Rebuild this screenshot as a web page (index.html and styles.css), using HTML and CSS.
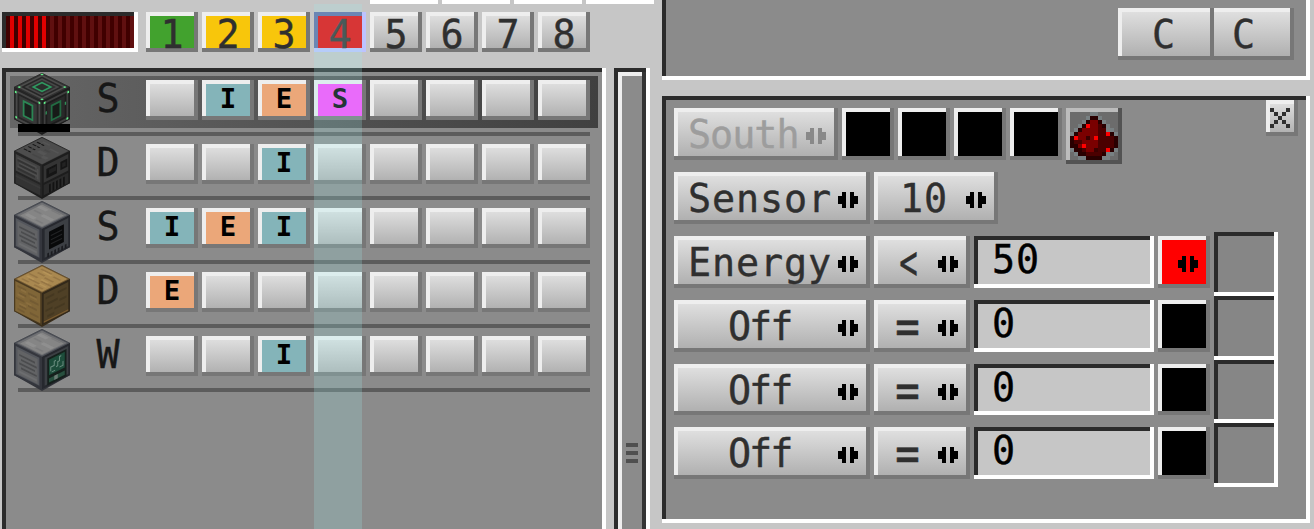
FILE: index.html
```html
<!DOCTYPE html>
<html lang="en">
<head>
<meta charset="utf-8">
<title>Controller</title>
<link rel="stylesheet" href="styles.css">
</head>
<body>
<svg class="defs" aria-hidden="true">
  <defs>
    <symbol id="arrows" viewBox="0 0 5 4"><path d="M0 1h1V0h1v4H1V3H0zM3 0h1v1h1v2H4v1H3z"/></symbol>
    <g id="steel-body">
      <path fill="#33353b" d="M28 0l28 14v32L28 62 0 46V14z"/>
      <g transform="matrix(1.75 .875 -1.75 .875 28 0)">
        <path fill="#4b4e55" d="M0 0h16v16H0z"/><path fill="#6f7073" d="M.8 .8h14.400v14.400H.8z"/><path fill="#858585" d="M2 2h12.500v12.500H2z"/>
        <path fill="#8f8f8f" d="M2 3h5v2H2zM8 7h6v2H8zM3 11h5v2H3z"/><path fill="#7b7b7c" d="M8 2h5v1H8zM3 7h4v1H3zM9 12h4v1H9z"/>
      </g>
      <g transform="matrix(1.75 .875 0 2.08 0 14)">
        <path fill="#34363d" d="M0 0h16v15.500H0z"/><path fill="#54575d" d="M1 1h13.500v13.500H1z"/><path fill="#626365" d="M2 2h11.500v12H2z"/>
        <path fill="#4b4c4e" d="M3 4h9v.9H3zM4 6h9v.9H4zM3 8h9v.9H3zM4 10h9v.9H4z"/><path fill="#6c6d6f" d="M3 12h10v1H3z"/>
      </g>
      <g transform="matrix(1.75 -.875 0 2.08 28 28)">
        <path fill="#26282e" d="M0 0h16v15.500H0z"/><path fill="#3c3f44" d="M1.500 1h13.500v13.500H1.500z"/>
      </g>
    </g>
  </defs>
</svg>

<div class="screen">
  <div class="left">
    <div class="tabs"><i></i><i></i><i></i><i></i></div>
    <div class="toolbar">
      <div class="power sunken"><div class="power-on"></div></div>
      <div class="digits">
        <div class="btn key green">1</div><div class="btn key yellow">2</div><div class="btn key yellow">3</div><div class="btn key red">4</div>
        <div class="btn key">5</div><div class="btn key">6</div><div class="btn key">7</div><div class="btn key">8</div>
      </div>
    </div>
    <div class="browser">
      <div class="list sunken">
        <div class="row selected">
          <svg class="cube" viewBox="0 0 56 62">
            <path fill="#1c1c1c" d="M28 0l28 14v32L28 62 0 46V14z"/>
            <g transform="matrix(1.75 .875 -1.75 .875 28 0)"><path fill="#303030" d="M0 0h16v16H0z"/><path fill="#4d4d4c" d="M1 1h14v14H1z"/><path fill="#262626" d="M2 2h12v12H2z"/><path fill="#474747" d="M3 3h10v10H3z"/><path fill="#303030" d="M4 4h8v8H4z"/><path fill="#2f9a60" d="M5 5h6v6H5z"/><path fill="#2b2e2c" d="M6 6h4v4H6z"/><path fill="#61f58a" d="M.3 .3h1v1h-1zM14 1h1v1h-1zM1 14h1v1H1zM14.500 14.500h1v1h-1z"/></g>
            <g transform="matrix(1.75 .875 0 2.08 0 14)"><path fill="#252525" d="M0 0h16v15.500H0z"/><path fill="#484848" d="M1 1h1v14H1zM14 1h1v14h-1zM1 1h14v1H1zM1 14h14v1H1z"/><path fill="#383838" d="M3 3h10v10H3z"/><path fill="#2b8654" d="M5 4h6v8H5z"/><path fill="#1b211d" d="M6 5h4v6H6z"/><path fill="#61f58a" d="M.5 1.500h1v1h-1zM.8 13.500h1v1h-1zM14 1h1v1h-1zM14 14h1v1h-1z"/></g>
            <g transform="matrix(1.75 -.875 0 2.08 28 28)"><path fill="#1d1d1d" d="M0 0h16v15.500H0z"/><path fill="#3f3f3f" d="M1 1h1v14H1zM14 1h1v14h-1zM1 1h14v1H1zM1 14h14v1H1z"/><path fill="#292929" d="M3 3h10v10H3z"/><path fill="#226b42" d="M5 4h6v8H5z"/><path fill="#171b18" d="M6 5h4v6H6z"/><path fill="#61f58a" d="M1 1h1v1H1zM14.500 1.500h1v1h-1zM14 14h1v1h-1zM1 14h1v1H1z"/><path fill="#308b56" d="M2 6h.8v1.500H2zM13 6h.8v1.500H13z"/></g>
          </svg>
          <div class="durability"></div>
          <div class="letter">S</div>
          <div class="slots"><div class="btn tag"></div><div class="btn tag teal">I</div><div class="btn tag orange">E</div><div class="btn tag pink">S</div><div class="btn tag"></div><div class="btn tag"></div><div class="btn tag"></div><div class="btn tag"></div></div>
        </div>
        <div class="row">
          <svg class="cube" viewBox="0 0 56 62">
            <path fill="#1c1c1c" d="M28 0l28 14v32L28 62 0 46V14z"/>
            <g transform="matrix(1.75 .875 -1.75 .875 28 0)"><path fill="#303030" d="M0 0h16v16H0z"/><path fill="#4d4d4d" d="M.5 .5h15v15H.5z"/><path fill="#555" d="M3 2h4v1H3zM9 4h5v1H9zM7 8h4v2H7zM11 10h3v2h-3z"/><path fill="#474747" d="M8 6h3v1H8zM7 12h5v1H7z"/><path fill="#161616" d="M1.500 4h2v.7h-2zM4 4h1.500v.7H4zM1.500 6.500h2v.7h-2zM4 6.500h1.500v.7H4zM1.500 9h2v.7h-2zM4 9h1.500v.7H4zM1.500 11.500h2v.7h-2zM4 11.500h1.500v.7H4z"/></g>
            <g transform="matrix(1.75 .875 0 2.08 0 14)"><path fill="#252525" d="M0 0h16v15.500H0z"/><path fill="#424242" d="M1 1h14v8H1z"/><path fill="#4e4e4e" d="M2 2h11v1H2zM3 4h10v1H3zM2 6h11v1H2zM13 3h1v5h-1z"/><path fill="#333" d="M2 3h10v1H2zM3 5h10v1H3zM2 7h10v1H2zM1 10h14v5H1z"/><path fill="#3a3a3a" d="M1 11h14v1H1z"/></g>
            <g transform="matrix(1.75 -.875 0 2.08 28 28)"><path fill="#1d1d1d" d="M0 0h16v15.500H0z"/><path fill="#343434" d="M1 1h14v8H1z"/><path fill="#151515" d="M2.500 3h6v4.500h-6zM10.500 3h4v4h-4z"/><path fill="#222" d="M4 4h4v2H4zM11.500 4h2v2h-2z"/><path fill="#2a2a2a" d="M1 10h14v5H1z"/><path fill="#131313" d="M4 11h1v4H4zM6 11h1v4H6zM8 11h1v4H8zM10 11h1v4h-1zM12 11h1v4h-1z"/></g>
          </svg>
          <div class="letter">D</div>
          <div class="slots"><div class="btn tag"></div><div class="btn tag"></div><div class="btn tag teal">I</div><div class="btn tag"></div><div class="btn tag"></div><div class="btn tag"></div><div class="btn tag"></div><div class="btn tag"></div></div>
        </div>
        <div class="row">
          <svg class="cube" viewBox="0 0 56 62"><use href="#steel-body"/>
            <g transform="matrix(1.75 -.875 0 2.08 28 28)"><path fill="#08090a" d="M4 3h8.500v8.500H4z"/><path fill="#222325" d="M5 5h6.500v.6H5zM5 7h6.500v.6H5zM5 9h6.500v.6H5z"/><path fill="#1b1c20" d="M3 13h1v2H3zM5 13h1v2H5zM7 13h1v2H7zM9 13h1v2H9zM11 13h1v2h-1zM13 13h1v2h-1z"/></g>
          </svg>
          <div class="letter">S</div>
          <div class="slots"><div class="btn tag teal">I</div><div class="btn tag orange">E</div><div class="btn tag teal">I</div><div class="btn tag"></div><div class="btn tag"></div><div class="btn tag"></div><div class="btn tag"></div><div class="btn tag"></div></div>
        </div>
        <div class="row">
          <svg class="cube" viewBox="0 0 56 62">
            <path fill="#3a2e1b" d="M28 0l28 14v32L28 62 0 46V14z"/>
            <g transform="matrix(1.75 .875 -1.75 .875 28 0)"><path fill="#6e5631" d="M0 0h16v16H0z"/><path fill="#a98850" d="M.7 .7h14.600v14.600H.7z"/><path fill="#967645" d="M2 2h6v1H2zM10 3h4v1h-4zM3 5h4v1H3zM8 6h5v1H8zM1 8h5v1H1zM9 9h6v1H9zM4 11h6v1H4zM2 13h4v1H2zM9 13h5v1H9z"/><path fill="#b59358" d="M4 3h5v1H4zM8 8h4v1H8zM2 10h4v1H2zM10 11h4v1h-4z"/></g>
            <g transform="matrix(1.75 .875 0 2.08 0 14)"><path fill="#4b3b21" d="M0 0h16v15.500H0z"/><path fill="#806638" d="M.7 .7H15v14.300H.7z"/><path fill="#735b33" d="M2 2h5v1H2zM8 3h5v1H8zM3 5h4v1H3zM9 6h5v1H9zM1 8h5v1H1zM8 9h5v1H8zM3 11h4v1H3zM9 12h5v1H9zM2 13h4v1H2z"/><path fill="#8b6f3f" d="M4 3h3v1H4zM9 4h4v1H9zM2 6h4v1H2zM7 8h3v1H7zM3 10h4v1H3z"/></g>
            <g transform="matrix(1.75 -.875 0 2.08 28 28)"><path fill="#32281a" d="M0 0h16v15.500H0z"/><path fill="#4f4026" d="M1 1h14v13H1z"/><path fill="#453821" d="M2 3h5v1H2zM9 3h5v1H9zM3 6h6v1H3zM10 7h4v1h-4zM2 9h4v1H2zM7 10h6v1H7zM3 12h4v1H3z"/><path fill="#76592f" d="M1 14h14v.8H1z"/></g>
          </svg>
          <div class="letter">D</div>
          <div class="slots"><div class="btn tag orange">E</div><div class="btn tag"></div><div class="btn tag"></div><div class="btn tag"></div><div class="btn tag"></div><div class="btn tag"></div><div class="btn tag"></div><div class="btn tag"></div></div>
        </div>
        <div class="row">
          <svg class="cube" viewBox="0 0 56 62"><use href="#steel-body"/>
            <g transform="matrix(1.75 -.875 0 2.08 28 28)"><path fill="#15201c" d="M3 2h11v13H3z"/><path fill="#1d4d3b" d="M4 3h9v7.500H4z"/><path fill="#28503f" d="M4 12h9v2H4z"/><path fill="#6b7c75" d="M7 12h2v2H7z"/><path fill="none" stroke="#6b8e80" stroke-width=".55" d="M5 9V7h2V5h1M8 8h1V6h1V4h1M5.500 9.500h2M10 9h2V7"/></g>
          </svg>
          <div class="letter">W</div>
          <div class="slots"><div class="btn tag"></div><div class="btn tag"></div><div class="btn tag teal">I</div><div class="btn tag"></div><div class="btn tag"></div><div class="btn tag"></div><div class="btn tag"></div><div class="btn tag"></div></div>
        </div>
      </div>
      <div class="scroll sunken"><div class="thumb"><i></i><i></i><i></i></div></div>
    </div>
    <div class="column-mark"></div>
  </div>

  <div class="right">
    <div class="top sunken">
      <div class="btn copy first">C</div><div class="btn copy second">C</div>
    </div>
    <div class="editor sunken">
      <div class="line head">
        <div class="btn field south">South<svg class="arr"><use href="#arrows"/></svg></div>
        <div class="btn swatch"></div><div class="btn swatch"></div><div class="btn swatch"></div><div class="btn swatch"></div>
        <div class="redstone">
          <svg viewBox="0 0 12 12" shape-rendering="crispEdges">
            <path fill="#788082" d="M5 0h2v1h1v1h1v1h1v1h1v1h1v1H0V5h1V4h1V3h1V2h1V1h1zM0 9h12v1h-1v1h-1v1H2v-1H1v-1H0z"/>
            <path fill="#290000" d="M5 1h2v1h1v1h1v1h0v1h1v0h1v1h1v3h-1v1h-2v1H8v1H4v-1H2v-1H1V9H0V6h1V5h1V4h1V3h1V2h1z"/>
            <path fill="#4b0000" d="M7 3h1v1h1v1h1v1h1v3h-1v1H8v1H4v-1H3V9H2V8H1V7h6z"/>
            <path fill="#7a0000" d="M5 2h2v5h0v2H6v1H4V9H2V8h1V7H2V5h1V4h1V3h1z"/>
            <path fill="#3a0000" d="M4 6h1v1H4zM6 9h1v1H6z"/>
            <path fill="#f00" d="M4 3h1v1H4zM9 5h1v1H9zM1 6h1v1H1zM6 6h1v1H6zM3 8h1v1H3zM9 9h1v1H9z"/>
          </svg>
        </div>
        <div class="btn close"><svg viewBox="0 0 5 5" shape-rendering="crispEdges"><path d="M0 0h1v1H0zM4 0h1v1H4zM1 1h1v1H1zM3 1h1v1H3zM2 2h1v1H2zM1 3h1v1H1zM3 3h1v1H3zM0 4h1v1H0zM4 4h1v1H4z"/></svg></div>
      </div>
      <div class="line sensor">
        <div class="btn field wide">Sensor<svg class="arr"><use href="#arrows"/></svg></div>
        <div class="btn field ten">10<svg class="arr"><use href="#arrows"/></svg></div>
      </div>
      <div class="rules">
        <div class="rule-lines">
          <div class="line"><div class="btn field wide">Energy<svg class="arr"><use href="#arrows"/></svg></div><div class="btn field op"><span class="less">&lt;</span><svg class="arr"><use href="#arrows"/></svg></div><div class="input sunken">50</div><div class="btn swatch hot"><svg class="arr"><use href="#arrows"/></svg></div></div>
          <div class="line"><div class="btn field wide off">Off<svg class="arr"><use href="#arrows"/></svg></div><div class="btn field op"><span class="equal">=</span><svg class="arr"><use href="#arrows"/></svg></div><div class="input sunken">0</div><div class="btn swatch"></div></div>
          <div class="line"><div class="btn field wide off">Off<svg class="arr"><use href="#arrows"/></svg></div><div class="btn field op"><span class="equal">=</span><svg class="arr"><use href="#arrows"/></svg></div><div class="input sunken">0</div><div class="btn swatch"></div></div>
          <div class="line"><div class="btn field wide off">Off<svg class="arr"><use href="#arrows"/></svg></div><div class="btn field op"><span class="equal">=</span><svg class="arr"><use href="#arrows"/></svg></div><div class="input sunken">0</div><div class="btn swatch"></div></div>
        </div>
        <div class="item-slots"><div class="sunken"></div><div class="sunken"></div><div class="sunken"></div><div class="sunken"></div></div>
      </div>
    </div>
  </div>
</div>
</body>
</html>
```
FILE: styles.css
```css
* { box-sizing: border-box; }
body {
  margin: 0;
  width: 1314px;
  height: 529px;
  overflow: hidden;
  background: #c6c6c6;
  color: #2f2f2f;
  font: 38.4px/52px "DejaVu Sans Mono", monospace;
  -webkit-text-stroke: .4px currentColor;
}
.defs { position: absolute; width: 0; height: 0; }
.screen { display: flex; height: 529px; overflow: hidden; }
.sunken {
  background: #8b8b8b;
  box-shadow: inset -4px -4px 0 #fff, inset 4px 4px 0 #2b2b2b;
}
.btn {
  flex: none;
  background: linear-gradient(#e3e3e3, #acacac);
  box-shadow: inset -4px -4px 0 #777, inset 4px 4px 0 #eee;
  white-space: nowrap;
}

/* left side */
.left { position: relative; flex: none; width: 662px; height: 529px; }
.tabs { display: flex; gap: 4px; height: 4px; padding-left: 370px; }
.tabs i { width: 68px; background: #fff; }
.toolbar { display: flex; gap: 8px; padding: 8px 0 16px 2px; }
.power { width: 136px; height: 40px; padding: 4px; background: repeating-linear-gradient(90deg, #400000 0 4px, #601010 4px 8px) 4px 0; }
.power-on { width: 40px; height: 32px; background: repeating-linear-gradient(90deg, #400000 0 4px, #e00000 4px 8px); }
.digits, .slots { display: flex; gap: 4px; }
.key, .tag { width: 52px; height: 40px; text-align: center; line-height: 40px; }
.key { padding-top: 3px; }
.tag { color: #000; font-size: 27.4px; font-weight: 700; line-height: 37px; -webkit-text-stroke: 0; }
.green { background: #42a22e; }
.yellow { background: #f8c60b; }
.red { background: #e80000; box-shadow: inset -4px -4px 0 #bdc3ff, inset 4px 4px 0 #5b68a5; }
.teal { background: #84b4b9; }
.orange { background: #eba779; }
.pink { background: #ff45ff; }
.browser { display: flex; gap: 8px; padding-left: 2px; }
.list { width: 604px; height: 480px; padding: 4px 8px; }
.row { position: relative; display: flex; height: 64px; padding: 0 0 0 4px; }
.row::after { content: ""; position: absolute; left: 8px; right: 8px; bottom: 0; height: 4px; background: #5c5c5c; }
.row.selected { background: linear-gradient(90deg, #666, #404040) 0 4px / 588px 52px no-repeat; }
.cube { position: relative; z-index: 1; flex: none; width: 56px; height: 62px; margin-top: 1px; overflow: visible; }
.durability { position: absolute; z-index: 2; left: 8px; top: 52px; width: 52px; height: 8px; background: #000; }
.letter { width: 76px; padding-top: 1px; text-align: center; color: #171717; }
.slots { padding-top: 8px; }
.scroll { width: 36px; height: 480px; padding: 4px; }
.thumb { display: flex; flex-direction: column; gap: 4px; height: 472px; padding: 371px 0 0 8px; box-shadow: inset -4px 0 0 #343434, inset 4px 4px 0 #eee; }
.thumb i { width: 12px; height: 4px; background: #4f4f4f; }
.column-mark { position: absolute; z-index: 3; left: 314px; top: 4px; width: 48px; height: 525px; background: rgba(160, 235, 232, .23); }

/* right side */
.right { display: flex; flex-direction: column; gap: 16px; width: 648px; }
.top { display: flex; justify-content: flex-end; height: 80px; padding: 8px 16px 0 0; box-shadow: inset -4px -4px 0 #fff, inset 4px 0 0 #2b2b2b; }
.copy { height: 52px; padding-top: 1px; }
.first { width: 96px; padding-left: 34px; }
.second { width: 80px; padding-left: 18px; box-shadow: inset -4px -4px 0 #777, inset 0 4px 0 #eee; }
.editor { height: 427px; padding: 4px 4px 4px 12px; }
.line { display: flex; gap: 4px; height: 52px; }
.head { height: 68px; }
.head .field, .head .swatch, .redstone { margin-top: 8px; }
.field { position: relative; height: 52px; padding: 1px 0 0 14px; letter-spacing: .9px; }
.arr { position: absolute; right: 12px; top: 20px; width: 20px; height: 16px; fill: #000; shape-rendering: crispEdges; }
.south { width: 164px; color: #9d9d9d; letter-spacing: -1px; }
.south .arr { fill: #898989; }
.swatch { position: relative; width: 52px; height: 52px; background: #000; }
.hot { background: #f00; }
.redstone { flex: none; width: 56px; height: 56px; padding: 4px; background: #6c6c6c; box-shadow: inset -4px -4px 0 #535353, inset 4px 4px 0 #bcbcbc; }
.redstone svg { display: block; width: 48px; height: 48px; }
.close { width: 32px; height: 36px; margin: 0 8px 0 auto; padding: 8px 0 0 4px; }
.close svg { display: block; width: 20px; height: 20px; fill: #2f2f2f; }
.sensor { margin-top: 4px; }
.wide { width: 196px; }
.ten { width: 124px; padding-left: 26px; }
.off { padding-left: 54px; letter-spacing: -2px; }
.op { width: 96px; padding-left: 22px; }
.op span { display: inline-block; letter-spacing: 0; }
.less { transform: translateX(1px) scale(.8, 1.25); }
.equal { transform: scale(1.06, 1.3); }
.rules { display: flex; gap: 4px; margin-top: 8px; }
.rule-lines { display: flex; flex-direction: column; gap: 12px; padding-top: 4px; }
.rule-lines .line:nth-child(3), .rule-lines .line:nth-child(3) > div { height: 51px; }
.input { width: 180px; height: 52px; padding-left: 18px; background: #c6c6c6; color: #000; line-height: 47px; letter-spacing: .9px; }
.item-slots div { width: 64px; height: 64px; background: #868686; }
.item-slots div:nth-child(3) { height: 63px; }
```
